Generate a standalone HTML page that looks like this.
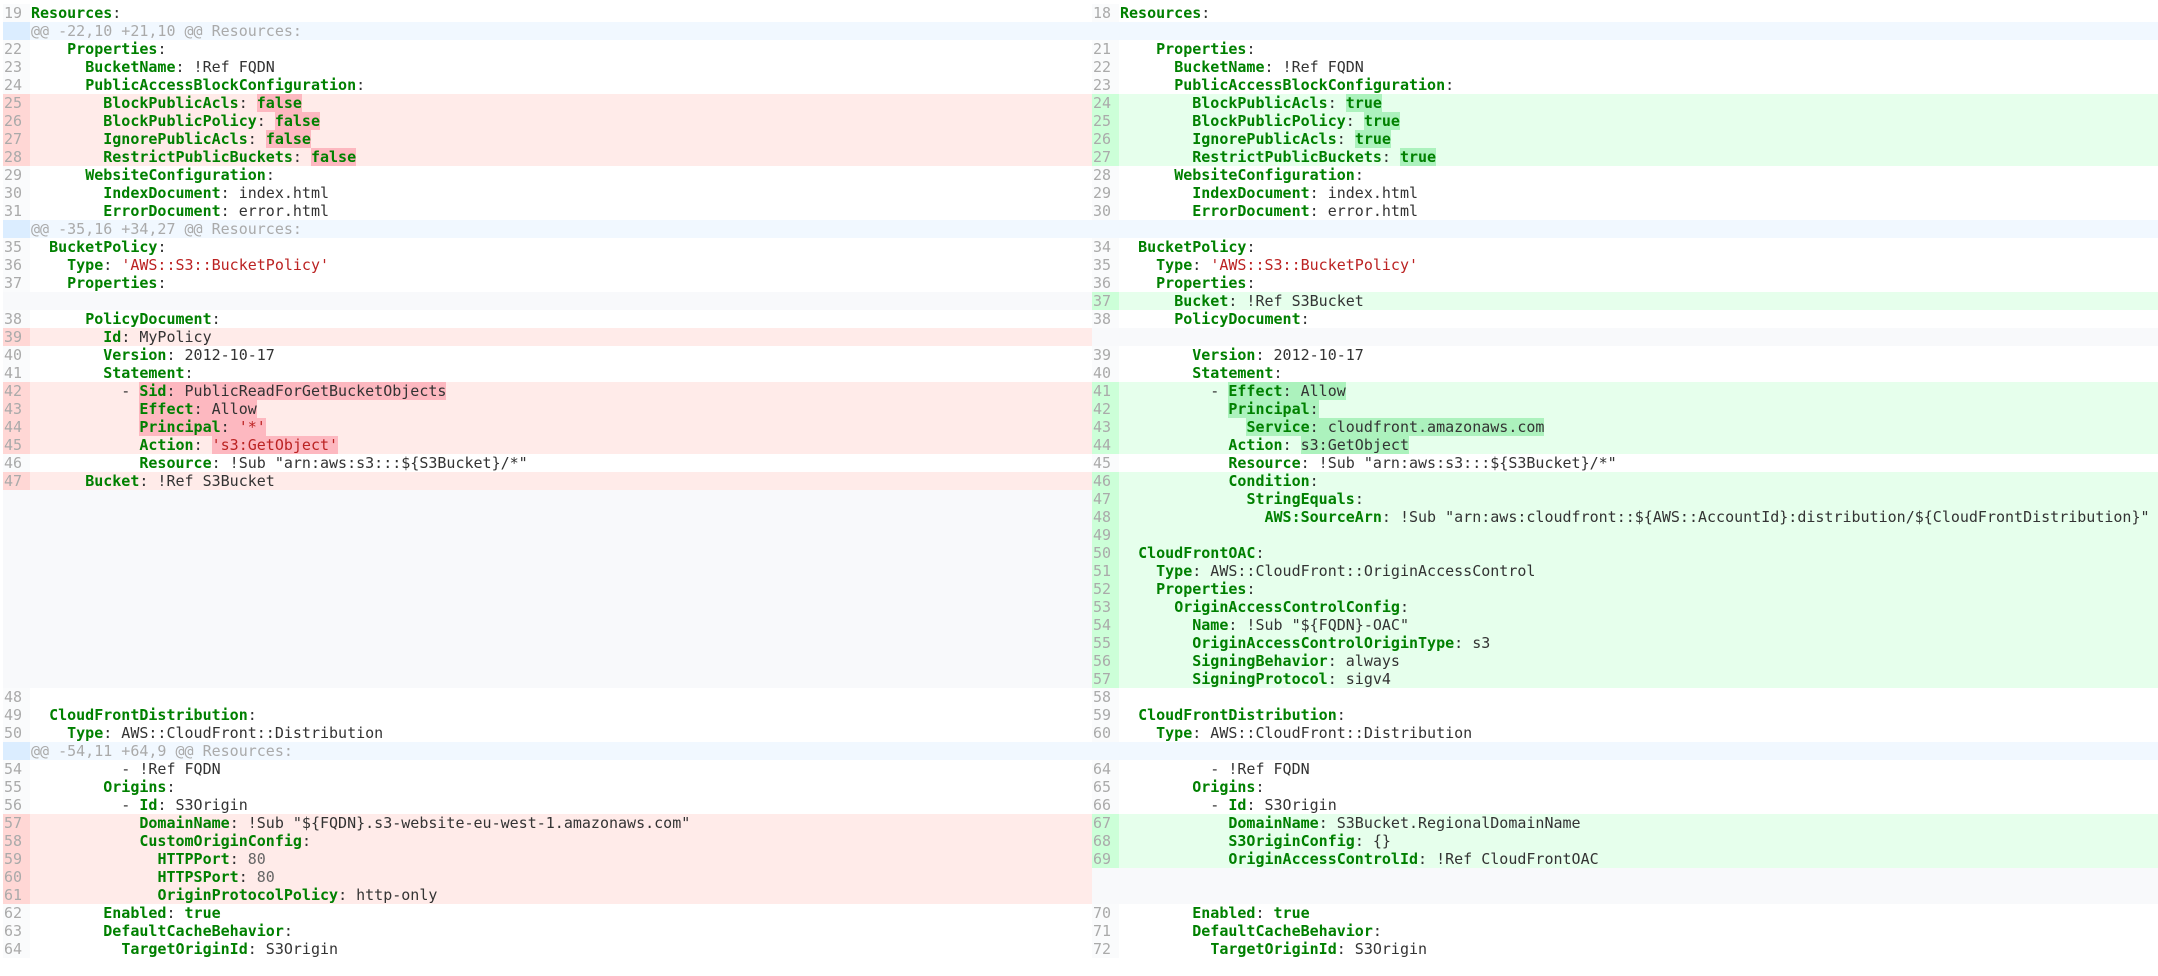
<!DOCTYPE html>
<html><head><meta charset="utf-8"><style>
html,body{margin:0;padding:0;background:#fff;width:2158px;height:976px;overflow:hidden}
.pane{position:absolute;top:4px;font-family:"DejaVu Sans Mono","Liberation Mono",monospace;font-size:15px;line-height:18px;color:#333}
#L{left:3px;width:1089px}
#R{left:1092px;width:1066px}
.r{height:18px;display:flex;white-space:pre}
.n{width:27px;flex:none;color:#aaa;padding-left:1px;box-sizing:border-box;background:#fafbfc}
.c{flex:1;padding-left:1px}
.d{background:#ffebe9}.d .n{background:#ffd7d5}
.a{background:#e6ffec}.a .n{background:#ccffd8}
.h{background:#f1f8ff;color:#aaa}.h .n{background:#dbedff}
#R .h .n{background:#f1f8ff}
.e{background:#f8f9fb}.e .n{background:#f8f9fb}
b{color:#008000;font-weight:bold}
.s{color:#b22}
.m{color:#666}
.d i{background:#fdb8c0;font-style:normal}
.a i{background:#acf2bd;font-style:normal}
</style></head><body>
<div class="pane" id="L">
<div class="r"><span class="n">19</span><span class="c"><b>Resources</b>:</span></div>
<div class="r h"><span class="n"></span><span class="c">@@ -22,10 +21,10 @@ Resources:</span></div>
<div class="r"><span class="n">22</span><span class="c">    <b>Properties</b>:</span></div>
<div class="r"><span class="n">23</span><span class="c">      <b>BucketName</b>: !Ref FQDN</span></div>
<div class="r"><span class="n">24</span><span class="c">      <b>PublicAccessBlockConfiguration</b>:</span></div>
<div class="r d"><span class="n">25</span><span class="c">        <b>BlockPublicAcls</b>: <i><b>false</b></i></span></div>
<div class="r d"><span class="n">26</span><span class="c">        <b>BlockPublicPolicy</b>: <i><b>false</b></i></span></div>
<div class="r d"><span class="n">27</span><span class="c">        <b>IgnorePublicAcls</b>: <i><b>false</b></i></span></div>
<div class="r d"><span class="n">28</span><span class="c">        <b>RestrictPublicBuckets</b>: <i><b>false</b></i></span></div>
<div class="r"><span class="n">29</span><span class="c">      <b>WebsiteConfiguration</b>:</span></div>
<div class="r"><span class="n">30</span><span class="c">        <b>IndexDocument</b>: index.html</span></div>
<div class="r"><span class="n">31</span><span class="c">        <b>ErrorDocument</b>: error.html</span></div>
<div class="r h"><span class="n"></span><span class="c">@@ -35,16 +34,27 @@ Resources:</span></div>
<div class="r"><span class="n">35</span><span class="c">  <b>BucketPolicy</b>:</span></div>
<div class="r"><span class="n">36</span><span class="c">    <b>Type</b>: <span class="s">'AWS::S3::BucketPolicy'</span></span></div>
<div class="r"><span class="n">37</span><span class="c">    <b>Properties</b>:</span></div>
<div class="r e"><span class="n"></span><span class="c"></span></div>
<div class="r"><span class="n">38</span><span class="c">      <b>PolicyDocument</b>:</span></div>
<div class="r d"><span class="n">39</span><span class="c">        <b>Id</b>: MyPolicy</span></div>
<div class="r"><span class="n">40</span><span class="c">        <b>Version</b>: 2012-10-17</span></div>
<div class="r"><span class="n">41</span><span class="c">        <b>Statement</b>:</span></div>
<div class="r d"><span class="n">42</span><span class="c">          - <i><b>Sid</b>: PublicReadForGetBucketObjects</i></span></div>
<div class="r d"><span class="n">43</span><span class="c">            <i><b>Effect</b>: Allow</i></span></div>
<div class="r d"><span class="n">44</span><span class="c">            <i><b>Principal</b>: <span class="s">'*'</span></i></span></div>
<div class="r d"><span class="n">45</span><span class="c">            <b>Action</b>: <i><span class="s">'s3:GetObject'</span></i></span></div>
<div class="r"><span class="n">46</span><span class="c">            <b>Resource</b>: !Sub "arn:aws:s3:::${S3Bucket}/*"</span></div>
<div class="r d"><span class="n">47</span><span class="c">      <b>Bucket</b>: !Ref S3Bucket</span></div>
<div class="r e"><span class="n"></span><span class="c"></span></div>
<div class="r e"><span class="n"></span><span class="c"></span></div>
<div class="r e"><span class="n"></span><span class="c"></span></div>
<div class="r e"><span class="n"></span><span class="c"></span></div>
<div class="r e"><span class="n"></span><span class="c"></span></div>
<div class="r e"><span class="n"></span><span class="c"></span></div>
<div class="r e"><span class="n"></span><span class="c"></span></div>
<div class="r e"><span class="n"></span><span class="c"></span></div>
<div class="r e"><span class="n"></span><span class="c"></span></div>
<div class="r e"><span class="n"></span><span class="c"></span></div>
<div class="r e"><span class="n"></span><span class="c"></span></div>
<div class="r"><span class="n">48</span><span class="c"></span></div>
<div class="r"><span class="n">49</span><span class="c">  <b>CloudFrontDistribution</b>:</span></div>
<div class="r"><span class="n">50</span><span class="c">    <b>Type</b>: AWS::CloudFront::Distribution</span></div>
<div class="r h"><span class="n"></span><span class="c">@@ -54,11 +64,9 @@ Resources:</span></div>
<div class="r"><span class="n">54</span><span class="c">          - !Ref FQDN</span></div>
<div class="r"><span class="n">55</span><span class="c">        <b>Origins</b>:</span></div>
<div class="r"><span class="n">56</span><span class="c">          - <b>Id</b>: S3Origin</span></div>
<div class="r d"><span class="n">57</span><span class="c">            <b>DomainName</b>: !Sub "${FQDN}.s3-website-eu-west-1.amazonaws.com"</span></div>
<div class="r d"><span class="n">58</span><span class="c">            <b>CustomOriginConfig</b>:</span></div>
<div class="r d"><span class="n">59</span><span class="c">              <b>HTTPPort</b>: <span class="m">80</span></span></div>
<div class="r d"><span class="n">60</span><span class="c">              <b>HTTPSPort</b>: <span class="m">80</span></span></div>
<div class="r d"><span class="n">61</span><span class="c">              <b>OriginProtocolPolicy</b>: http-only</span></div>
<div class="r"><span class="n">62</span><span class="c">        <b>Enabled</b>: <b>true</b></span></div>
<div class="r"><span class="n">63</span><span class="c">        <b>DefaultCacheBehavior</b>:</span></div>
<div class="r"><span class="n">64</span><span class="c">          <b>TargetOriginId</b>: S3Origin</span></div>
</div>
<div class="pane" id="R">
<div class="r"><span class="n">18</span><span class="c"><b>Resources</b>:</span></div>
<div class="r h"><span class="n"></span><span class="c"></span></div>
<div class="r"><span class="n">21</span><span class="c">    <b>Properties</b>:</span></div>
<div class="r"><span class="n">22</span><span class="c">      <b>BucketName</b>: !Ref FQDN</span></div>
<div class="r"><span class="n">23</span><span class="c">      <b>PublicAccessBlockConfiguration</b>:</span></div>
<div class="r a"><span class="n">24</span><span class="c">        <b>BlockPublicAcls</b>: <i><b>true</b></i></span></div>
<div class="r a"><span class="n">25</span><span class="c">        <b>BlockPublicPolicy</b>: <i><b>true</b></i></span></div>
<div class="r a"><span class="n">26</span><span class="c">        <b>IgnorePublicAcls</b>: <i><b>true</b></i></span></div>
<div class="r a"><span class="n">27</span><span class="c">        <b>RestrictPublicBuckets</b>: <i><b>true</b></i></span></div>
<div class="r"><span class="n">28</span><span class="c">      <b>WebsiteConfiguration</b>:</span></div>
<div class="r"><span class="n">29</span><span class="c">        <b>IndexDocument</b>: index.html</span></div>
<div class="r"><span class="n">30</span><span class="c">        <b>ErrorDocument</b>: error.html</span></div>
<div class="r h"><span class="n"></span><span class="c"></span></div>
<div class="r"><span class="n">34</span><span class="c">  <b>BucketPolicy</b>:</span></div>
<div class="r"><span class="n">35</span><span class="c">    <b>Type</b>: <span class="s">'AWS::S3::BucketPolicy'</span></span></div>
<div class="r"><span class="n">36</span><span class="c">    <b>Properties</b>:</span></div>
<div class="r a"><span class="n">37</span><span class="c">      <b>Bucket</b>: !Ref S3Bucket</span></div>
<div class="r"><span class="n">38</span><span class="c">      <b>PolicyDocument</b>:</span></div>
<div class="r e"><span class="n"></span><span class="c"></span></div>
<div class="r"><span class="n">39</span><span class="c">        <b>Version</b>: 2012-10-17</span></div>
<div class="r"><span class="n">40</span><span class="c">        <b>Statement</b>:</span></div>
<div class="r a"><span class="n">41</span><span class="c">          - <i><b>Effect</b>: Allow</i></span></div>
<div class="r a"><span class="n">42</span><span class="c">            <i><b>Principal</b>:</i></span></div>
<div class="r a"><span class="n">43</span><span class="c">              <i><b>Service</b>: cloudfront.amazonaws.com</i></span></div>
<div class="r a"><span class="n">44</span><span class="c">            <b>Action</b>: <i>s3:GetObject</i></span></div>
<div class="r"><span class="n">45</span><span class="c">            <b>Resource</b>: !Sub "arn:aws:s3:::${S3Bucket}/*"</span></div>
<div class="r a"><span class="n">46</span><span class="c">            <b>Condition</b>:</span></div>
<div class="r a"><span class="n">47</span><span class="c">              <b>StringEquals</b>:</span></div>
<div class="r a"><span class="n">48</span><span class="c">                <b>AWS:SourceArn</b>: !Sub "arn:aws:cloudfront::${AWS::AccountId}:distribution/${CloudFrontDistribution}"</span></div>
<div class="r a"><span class="n">49</span><span class="c"></span></div>
<div class="r a"><span class="n">50</span><span class="c">  <b>CloudFrontOAC</b>:</span></div>
<div class="r a"><span class="n">51</span><span class="c">    <b>Type</b>: AWS::CloudFront::OriginAccessControl</span></div>
<div class="r a"><span class="n">52</span><span class="c">    <b>Properties</b>:</span></div>
<div class="r a"><span class="n">53</span><span class="c">      <b>OriginAccessControlConfig</b>:</span></div>
<div class="r a"><span class="n">54</span><span class="c">        <b>Name</b>: !Sub "${FQDN}-OAC"</span></div>
<div class="r a"><span class="n">55</span><span class="c">        <b>OriginAccessControlOriginType</b>: s3</span></div>
<div class="r a"><span class="n">56</span><span class="c">        <b>SigningBehavior</b>: always</span></div>
<div class="r a"><span class="n">57</span><span class="c">        <b>SigningProtocol</b>: sigv4</span></div>
<div class="r"><span class="n">58</span><span class="c"></span></div>
<div class="r"><span class="n">59</span><span class="c">  <b>CloudFrontDistribution</b>:</span></div>
<div class="r"><span class="n">60</span><span class="c">    <b>Type</b>: AWS::CloudFront::Distribution</span></div>
<div class="r h"><span class="n"></span><span class="c"></span></div>
<div class="r"><span class="n">64</span><span class="c">          - !Ref FQDN</span></div>
<div class="r"><span class="n">65</span><span class="c">        <b>Origins</b>:</span></div>
<div class="r"><span class="n">66</span><span class="c">          - <b>Id</b>: S3Origin</span></div>
<div class="r a"><span class="n">67</span><span class="c">            <b>DomainName</b>: S3Bucket.RegionalDomainName</span></div>
<div class="r a"><span class="n">68</span><span class="c">            <b>S3OriginConfig</b>: {}</span></div>
<div class="r a"><span class="n">69</span><span class="c">            <b>OriginAccessControlId</b>: !Ref CloudFrontOAC</span></div>
<div class="r e"><span class="n"></span><span class="c"></span></div>
<div class="r e"><span class="n"></span><span class="c"></span></div>
<div class="r"><span class="n">70</span><span class="c">        <b>Enabled</b>: <b>true</b></span></div>
<div class="r"><span class="n">71</span><span class="c">        <b>DefaultCacheBehavior</b>:</span></div>
<div class="r"><span class="n">72</span><span class="c">          <b>TargetOriginId</b>: S3Origin</span></div>
</div>
</body></html>
